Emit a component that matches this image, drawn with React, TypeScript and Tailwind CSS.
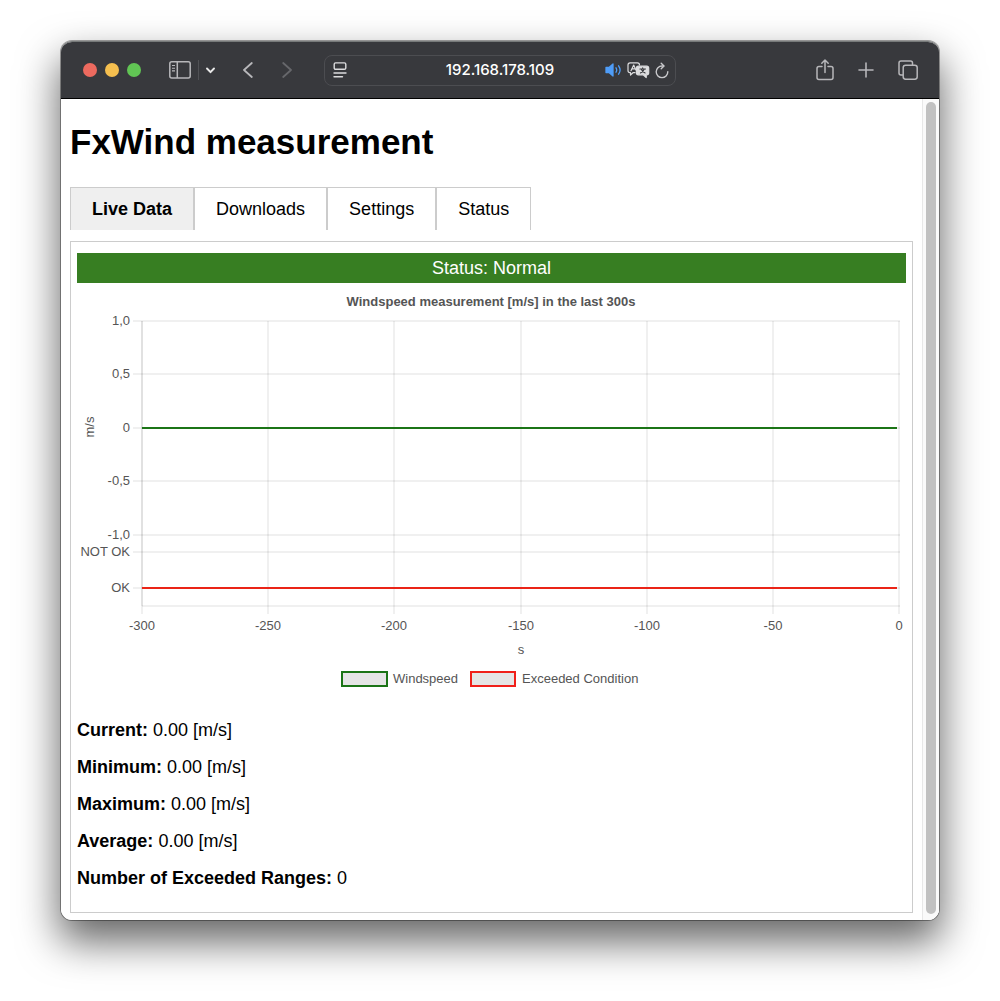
import { useState } from "react";

const TABS = ["Live Data", "Downloads", "Settings", "Status"];

const STATS = [
  { label: "Current:", value: "0.00 [m/s]" },
  { label: "Minimum:", value: "0.00 [m/s]" },
  { label: "Maximum:", value: "0.00 [m/s]" },
  { label: "Average:", value: "0.00 [m/s]" },
  { label: "Number of Exceeded Ranges:", value: "0" },
];

const X_TICKS = [
  { x: 65, label: "-300" },
  { x: 191, label: "-250" },
  { x: 317, label: "-200" },
  { x: 444, label: "-150" },
  { x: 570, label: "-100" },
  { x: 696, label: "-50" },
  { x: 822, label: "0" },
];

const Y_TICKS = [
  { y: 38, label: "1,0" },
  { y: 91, label: "0,5" },
  { y: 145, label: "0" },
  { y: 198, label: "-0,5" },
  { y: 252, label: "-1,0" },
  { y: 269, label: "NOT OK" },
  { y: 305, label: "OK" },
];

function WindChart() {
  return (
    <svg
      viewBox="0 0 829 412"
      className="block h-auto w-full fill-[#555] text-[13px]"
      role="img"
      aria-label="Windspeed measurement [m/s] in the last 300s"
    >
      <text x="414" y="23" textAnchor="middle" className="font-bold">
        Windspeed measurement [m/s] in the last 300s
      </text>
      <g stroke="#000" strokeOpacity="0.12">
        {Y_TICKS.map((t) => (
          <line key={t.label} x1="56" x2="823" y1={t.y} y2={t.y} />
        ))}
        <line x1="65" x2="823" y1="323" y2="323" />
        {X_TICKS.map((t) => (
          <line key={t.label} x1={t.x} x2={t.x} y1="38" y2="331" />
        ))}
        <line x1="65" x2="65" y1="38" y2="323" />
      </g>
      {Y_TICKS.map((t) => (
        <text key={t.label} x="53" y={t.y + 4} textAnchor="end">
          {t.label}
        </text>
      ))}
      {X_TICKS.map((t) => (
        <text key={t.label} x={t.x} y="347" textAnchor="middle">
          {t.label}
        </text>
      ))}
      <text transform="translate(17 144) rotate(-90)" textAnchor="middle">
        m/s
      </text>
      <text x="444" y="371" textAnchor="middle">
        s
      </text>
      <line x1="65" x2="820" y1="145" y2="145" stroke="#1b7416" strokeWidth="2" />
      <line x1="65" x2="820" y1="305" y2="305" stroke="#ea2417" strokeWidth="2" />
      <rect x="265" y="389" width="45" height="14" fill="#e5e5e5" stroke="#1b7416" strokeWidth="2" />
      <text x="316" y="400">Windspeed</text>
      <rect x="394" y="389" width="44" height="14" fill="#e5e5e5" stroke="#f0201a" strokeWidth="2" />
      <text x="445" y="400">Exceeded Condition</text>
    </svg>
  );
}

function Toolbar() {
  return (
    <header className="grid h-[57px] grid-cols-[1fr_352px_1fr] items-center border-b border-black bg-[#38393d] text-[#b7b7ba]">
      <div className="flex items-center pl-[22px]">
        <div className="flex gap-2">
          <button aria-label="Close" className="size-[14px] rounded-full bg-[#ed6a5f]" />
          <button aria-label="Minimize" className="size-[14px] rounded-full bg-[#f5bf4f]" />
          <button aria-label="Zoom" className="size-[14px] rounded-full bg-[#61c554]" />
        </div>
        <button aria-label="Show sidebar" className="ml-7">
          <svg width="22" height="18" viewBox="0 0 22 18" fill="none" stroke="currentColor" strokeWidth="1.5">
            <rect x="0.8" y="0.8" width="20.4" height="16.2" rx="2" />
            <path d="M8.3 1v16" />
            <path d="M3 4.5h3M3 7.2h3M3 9.9h3" strokeWidth="1.1" />
          </svg>
        </button>
        <div className="ml-[7px] h-5 w-px bg-[#505155]" />
        <button aria-label="Sidebar options" className="ml-[7px] text-[#e8e8e8]">
          <svg width="9" height="7" viewBox="0 0 9 7" fill="none" stroke="currentColor" strokeWidth="1.9" strokeLinecap="round" strokeLinejoin="round">
            <path d="M1 1.5l3.5 3.7L8 1.5" />
          </svg>
        </button>
        <button aria-label="Back" className="ml-7">
          <svg width="10" height="16" viewBox="0 0 10 16" fill="none" stroke="currentColor" strokeWidth="1.8" strokeLinecap="round" strokeLinejoin="round">
            <path d="M8.8 1L1 8l7.8 7" />
          </svg>
        </button>
        <button aria-label="Forward" className="ml-[29px] text-[#66676b]">
          <svg width="10" height="16" viewBox="0 0 10 16" fill="none" stroke="currentColor" strokeWidth="1.8" strokeLinecap="round" strokeLinejoin="round">
            <path d="M1.2 1L9 8l-7.8 7" />
          </svg>
        </button>
      </div>

      <div className="flex h-[31px] items-center rounded-lg border border-[#4c4d51] pr-[6px] pl-2">
        <button aria-label="Page menu" className="text-[#dcdcde]">
          <svg width="14" height="16" viewBox="0 0 14 16" fill="none" stroke="currentColor" strokeWidth="1.4" strokeLinecap="round">
            <rect x="1.2" y="0.9" width="11.6" height="6.4" rx="1.4" />
            <path d="M1 11h12M1 14.8h8.5" />
          </svg>
        </button>
        <input
          aria-label="Address"
          defaultValue="192.168.178.109"
          className="ml-12 min-w-0 flex-1 bg-transparent text-center font-['Inter',sans-serif] text-[15px] font-medium text-white outline-none"
        />
        <button aria-label="Mute tab" className="text-[#4f9df8]">
          <svg width="17" height="14" viewBox="0 0 17 14" fill="none" stroke="currentColor" strokeWidth="1.3" strokeLinecap="round">
            <path d="M1 4.5h3L8 1v12L4 9.5H1z" fill="currentColor" strokeLinejoin="round" />
            <path d="M11 4.8q1.4 2.2 0 4.4M13.6 2.8q3 4.2 0 8.4" />
          </svg>
        </button>
        <button aria-label="Translate" className="ml-[5px] text-[#dcdcde]">
          <svg width="23" height="17" viewBox="0 0 23 17" fill="none" stroke="currentColor" strokeWidth="1.2" strokeLinecap="round" strokeLinejoin="round">
            <path d="M8 10.700H6L3.500 13v-2.300H3Q1 10.700 1 8.500V3Q1 .9 3 .9h7.500Q12.500.9 12.500 3" />
            <path d="M4 8.700L6.700 3l2.200 5M5 6.800h3.300" />
            <path d="M11.400 4.200h8.300q2 0 2 2v4.600q0 2-2 2h-.5V15.600l-3-2.800h-4.800q-2 0-2-2V6.200q0-2 2-2z" fill="currentColor" />
            <path d="M12.900 7h5.600M15.700 5.900V7M17.300 7q-1 2.800-3.900 4M14.100 7q1.200 2.800 4 4" stroke="#38393d" strokeWidth="1.1" />
          </svg>
        </button>
        <button aria-label="Reload" className="ml-[5px] text-[#c9c9cc]">
          <svg width="14" height="17" viewBox="0 0 14 17" fill="none" stroke="currentColor" strokeWidth="1.4" strokeLinecap="round" strokeLinejoin="round">
            <path d="M8.600 4H7a5.800 5.800 0 1 0 5.800 5.800" />
            <path d="M6.200 1.200L9 4 6.200 6.800" />
          </svg>
        </button>
      </div>

      <div className="flex items-center justify-end gap-6 pr-[21px]">
        <button aria-label="Share">
          <svg width="18" height="22" viewBox="0 0 18 22" fill="none" stroke="currentColor" strokeWidth="1.5" strokeLinecap="round" strokeLinejoin="round">
            <path d="M6 7.500H3Q1 7.500 1 9.500v9q0 2 2 2h12q2 0 2-2v-9q0-2-2-2h-3" />
            <path d="M9 13.500V1.200M5.800 4.200L9 1l3.200 3.200" />
          </svg>
        </button>
        <button aria-label="New tab">
          <svg width="16" height="16" viewBox="0 0 16 16" fill="none" stroke="currentColor" strokeWidth="1.6" strokeLinecap="round">
            <path d="M8 1v14M1 8h14" />
          </svg>
        </button>
        <button aria-label="Tab overview">
          <svg width="20" height="20" viewBox="0 0 20 20" fill="none" stroke="currentColor" strokeWidth="1.5">
            <rect x="5.200" y="5.200" width="14" height="14" rx="2.400" />
            <path d="M5 15H3Q1 15 1 13V3Q1 1 3 1h9.500q2 0 2 2v2" />
          </svg>
        </button>
      </div>
    </header>
  );
}

export default function App() {
  const [active, setActive] = useState("Live Data");

  return (
    <div className="bg-white px-[61px] pt-[41px] pb-20 font-['Liberation_Sans',Arial,sans-serif] text-lg text-black">
      <div className="overflow-hidden rounded-[11px] border-t border-[#777a7a] shadow-[0_0_0_1px_rgba(0,0,0,0.35),0_20px_40px_2px_rgba(0,0,0,0.6)]">
        <Toolbar />
        <div className="flex bg-white">
          <main className="min-w-0 flex-1 px-[9px] pt-[22px] pb-[7px]">
            <h1 className="text-[35px] leading-[42px] font-bold">FxWind measurement</h1>
            <div role="tablist" className="mt-6 flex">
              {TABS.map((tab) => (
                <button
                  key={tab}
                  role="tab"
                  aria-selected={tab === active}
                  onClick={() => setActive(tab)}
                  className={
                    tab === active
                      ? "h-[43px] border border-b-0 border-[#ccc] bg-[#efefef] px-[21px] font-bold"
                      : "h-[43px] border border-b-0 border-[#ccc] px-[21px]"
                  }
                >
                  {tab}
                </button>
              ))}
            </div>
            <section role="tabpanel" aria-label={active} className="mt-[11px] border border-[#ccc] px-[6px] pt-[11px] pb-6">
              <div className="bg-[#377e22] text-center leading-[30px] text-white">Status: Normal</div>
              <WindChart />
              <div className="mt-[25px] flex flex-col gap-[17px] leading-5">
                {STATS.map((s) => (
                  <p key={s.label}>
                    <b>{s.label}</b> {s.value}
                  </p>
                ))}
              </div>
            </section>
          </main>
          <div className="w-[17px] border-l border-[#e8e8e8] bg-[#fafafa] pt-[3px] pr-[3px] pb-[6px] pl-[3px]">
            <div className="h-full rounded-full bg-[#c1c1c1]" />
          </div>
        </div>
      </div>
    </div>
  );
}
